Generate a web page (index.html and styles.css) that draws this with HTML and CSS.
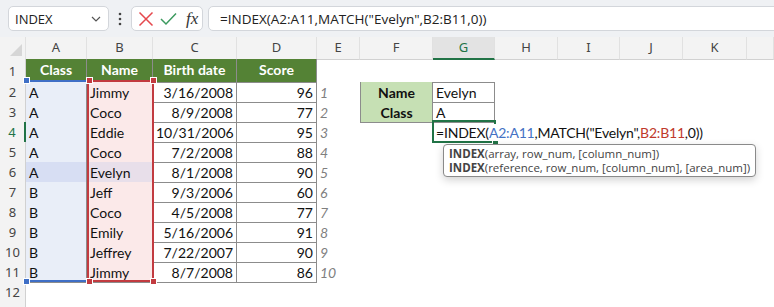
FILE: index.html
```html
<!DOCTYPE html>
<html lang="en">
<head>
  <meta charset="UTF-8">
  <title>INDEX MATCH</title>
  <link rel="stylesheet" href="styles.css">
</head>
<body>

  <div class="toolbar">
    <div class="namebox">
      <span>INDEX</span>
      <svg class="chev" width="10" height="6" viewBox="0 0 10 6"><path d="M1 1 L5 5 L9 1" fill="none" stroke="#555" stroke-width="1.2"/></svg>
    </div>
    <div class="dots">
      <svg width="4" height="14" viewBox="0 0 4 14"><circle cx="2" cy="2" r="1.3" fill="#444"/><circle cx="2" cy="7" r="1.3" fill="#444"/><circle cx="2" cy="12" r="1.3" fill="#444"/></svg>
    </div>
    <div class="fxbox">
      <svg width="16" height="16" viewBox="0 0 16 16"><path d="M1.5 1.5 L14.5 14.5 M14.5 1.5 L1.5 14.5" stroke="#e5484d" stroke-width="1.5" fill="none"/></svg>
      <svg width="17" height="14" viewBox="0 0 17 14"><path d="M1 7 L6 12 L16 1.5" stroke="#3c9a5f" stroke-width="1.5" fill="none"/></svg>
      <span class="fx">fx</span>
    </div>
    <div class="formula">=INDEX(A2:A11,MATCH("Evelyn",B2:B11,0))</div>
  </div>

  <div class="sheet">
    <div class="row colheads">
      <div class="corner">
        <svg width="14" height="14" viewBox="0 0 14 14"><polygon points="13,1 13,13 1,13" fill="#d6d6d6"/></svg>
      </div>
      <div class="ch">A</div><div class="ch">B</div><div class="ch">C</div><div class="ch">D</div>
      <div class="ch">E</div><div class="ch">F</div><div class="ch active">G</div><div class="ch">H</div>
      <div class="ch">I</div><div class="ch">J</div><div class="ch">K</div><div class="ch"></div>
    </div>

    <div class="row r1">
      <div class="rh">1</div>
      <div class="c t th">Class</div><div class="c t th">Name</div><div class="c t th">Birth date</div><div class="c t th">Score</div>
      <div class="c"></div><div class="c under"></div><div class="c under"></div>
    </div>
    <div class="row">
      <div class="rh">2</div>
      <div class="c t ca">A</div><div class="c t cb">Jimmy</div><div class="c t num">3/16/2008</div><div class="c t num">96</div>
      <div class="c idx">1</div><div class="c lk lbl first">Name</div><div class="c lk">Evelyn</div>
    </div>
    <div class="row">
      <div class="rh">3</div>
      <div class="c t ca">A</div><div class="c t cb">Coco</div><div class="c t num">8/9/2008</div><div class="c t num">77</div>
      <div class="c idx">2</div><div class="c lk lbl first">Class</div><div class="c lk">A</div>
    </div>
    <div class="row">
      <div class="rh active">4</div>
      <div class="c t ca">A</div><div class="c t cb">Eddie</div><div class="c t num">10/31/2006</div><div class="c t num">95</div>
      <div class="c idx">3</div><div class="c"></div>
      <div class="c edit"><span class="edit-text">=INDEX(<span class="ref-a">A2:A11</span>,MATCH("Evelyn",<span class="ref-b">B2:B11</span>,0))</span></div>
    </div>
    <div class="row">
      <div class="rh">5</div>
      <div class="c t ca">A</div><div class="c t cb">Coco</div><div class="c t num">7/2/2008</div><div class="c t num">88</div>
      <div class="c idx">4</div>
    </div>
    <div class="row">
      <div class="rh">6</div>
      <div class="c t ca hit">A</div><div class="c t cb hit">Evelyn</div><div class="c t num">8/1/2008</div><div class="c t num">90</div>
      <div class="c idx">5</div>
    </div>
    <div class="row">
      <div class="rh">7</div>
      <div class="c t ca">B</div><div class="c t cb">Jeff</div><div class="c t num">9/3/2006</div><div class="c t num">60</div>
      <div class="c idx">6</div>
    </div>
    <div class="row">
      <div class="rh">8</div>
      <div class="c t ca">B</div><div class="c t cb">Coco</div><div class="c t num">4/5/2008</div><div class="c t num">77</div>
      <div class="c idx">7</div>
    </div>
    <div class="row">
      <div class="rh">9</div>
      <div class="c t ca">B</div><div class="c t cb">Emily</div><div class="c t num">5/16/2006</div><div class="c t num">91</div>
      <div class="c idx">8</div>
    </div>
    <div class="row">
      <div class="rh">10</div>
      <div class="c t ca">B</div><div class="c t cb">Jeffrey</div><div class="c t num">7/22/2007</div><div class="c t num">90</div>
      <div class="c idx">9</div>
    </div>
    <div class="row">
      <div class="rh">11</div>
      <div class="c t ca">B</div><div class="c t cb">Jimmy</div><div class="c t num">8/7/2008</div><div class="c t num">86</div>
      <div class="c idx">10</div>
    </div>
    <div class="row">
      <div class="rh">12</div>
    </div>
    <div class="row">
      <div class="rh"></div>
    </div>

    <!-- range highlights while editing -->
    <div class="range-a">
      <span class="handle tl"></span><span class="handle bl"></span>
    </div>
    <div class="range-b">
      <span class="handle tl"></span><span class="handle tr"></span>
      <span class="handle bl"></span><span class="handle br"></span>
    </div>
    <div class="edit-box"><span class="handle br"></span></div>

    <div class="tip">
      <div><b>INDEX</b>(array, row_num, [column_num])</div>
      <div><b>INDEX</b>(reference, row_num, [column_num], [area_num])</div>
    </div>
  </div>

</body>
</html>
```

FILE: styles.css
```css
body {
  margin: 0;
  width: 774px;
  height: 307px;
  overflow: hidden;
  background: #fff;
  font-family: Lato, sans-serif;
}

/* formula bar */
.toolbar {
  display: flex;
  align-items: center;
  height: 37px;
  padding-left: 8px;
  background: #eff1f4;
  box-sizing: border-box;
  font-family: 'Open Sans', sans-serif;
  font-size: 13px;
  color: #222;
}

.namebox, .fxbox, .formula {
  height: 25px;
  box-sizing: border-box;
  background: #fff;
  border: 1px solid #d3d6db;
  border-radius: 5px;
  display: flex;
  align-items: center;
}

.namebox {
  width: 101px;
  padding: 0 7px 0 6px;
  justify-content: space-between;
}

.dots {
  width: 22px;
  display: flex;
  justify-content: center;
}

.fxbox {
  width: 72px;
  padding-left: 6px;
  gap: 6px;
}

.fx {
  font-family: 'Liberation Serif', serif;
  font-style: italic;
  font-size: 17px;
  color: #333;
  margin-left: 3px;
}

.formula {
  flex: 1;
  margin-left: 5px;
  margin-right: -8px;
  padding-left: 11px;
  font-size: 13.5px;
}

/* grid */
.sheet {
  position: relative;
}

.row {
  display: grid;
  grid-template-columns: 26px 61px 66px 84px 80px 43px 73px 62px 63px 62px 63px 64px 27px;
  height: 20px;
}

.colheads {
  height: 22px;
  background: #f3f3f3;
}

.r1 {
  height: 23px;
}

.corner, .ch {
  box-sizing: border-box;
  border-right: 1px solid #e1e1e1;
  border-bottom: 1px solid #d1d1d1;
}

.corner {
  display: flex;
  align-items: flex-end;
  justify-content: flex-end;
  padding: 0 2px 2px 0;
}

.ch {
  text-align: center;
  font-family: 'Noto Sans', sans-serif;
  font-size: 13px;
  line-height: 21px;
  color: #444;
}

.ch.active {
  background: #e3e3e3;
  color: #217346;
  border-bottom: 2px solid #217346;
}

.rh {
  box-sizing: border-box;
  background: #f3f3f3;
  border-right: 1px solid #d1d1d1;
  border-bottom: 1px solid #e1e1e1;
  text-align: center;
  font-family: 'Noto Sans', sans-serif;
  font-size: 13px;
  line-height: 19px;
  padding-top: 1px;
  color: #444;
}

.r1 .rh {
  line-height: 22px;
}

.rh.active {
  color: #217346;
  border-right: 2px solid #217346;
}

.c {
  box-sizing: border-box;
  padding: 3px 3px 0;
  font-size: 14px;
  line-height: 16px;
  white-space: nowrap;
  color: #111;
}

.t {
  border-right: 1px solid #8c8c8c;
  border-bottom: 1px solid #8c8c8c;
}

.num {
  text-align: right;
}

.th {
  background: #548235;
  color: #fff;
  font-weight: bold;
  text-align: center;
  padding-top: 3px;
}

.ca { background: #e9eef8; }
.cb { background: #fbe9e9; }
.ca.hit { background: #d7def3; }
.cb.hit { background: #e8dfea; }

.idx {
  font-style: italic;
  color: #7f7f7f;
}

.under {
  border-bottom: 1px solid #8c8c8c;
}

.lk {
  border-right: 1px solid #8c8c8c;
  border-bottom: 1px solid #8c8c8c;
}

.lk.first {
  border-left: 1px solid #8c8c8c;
}

.lbl {
  background: #c6e0b4;
  font-weight: bold;
  text-align: center;
}

.edit {
  overflow: visible;
  position: relative;
  z-index: 2;
  letter-spacing: -0.2px;
}

.edit-text {
  background: #fff;
  padding-right: 2px;
}

.ref-a { color: #4472c4; }
.ref-b { color: #c0392b; }

/* overlays */
.range-a, .range-b, .edit-box {
  position: absolute;
  box-sizing: border-box;
}

.range-a {
  left: 26px;
  top: 43px;
  width: 61px;
  height: 202px;
  border-top: 2px solid #3f6fc6;
  border-bottom: 2px solid #3f6fc6;
}

.range-b {
  left: 87px;
  top: 43px;
  width: 67px;
  height: 202px;
  border: 2px solid #c23b40;
}

.edit-box {
  left: 432px;
  top: 83px;
  width: 64px;
  height: 23px;
  border: 2px solid #217346;
  z-index: 1;
}

.handle {
  position: absolute;
  width: 5px;
  height: 5px;
  border: 1px solid #fff;
  background: #c23b40;
}

.range-a .handle { background: #3f6fc6; }
.edit-box .handle { background: #217346; z-index: 3; }

.handle.tl { left: -3px; top: -5px; }
.handle.tr { right: -5px; top: -5px; }
.handle.bl { left: -3px; bottom: -5px; }
.handle.br { right: -5px; bottom: -5px; }

.tip {
  position: absolute;
  left: 443px;
  top: 107px;
  width: 313px;
  height: 33px;
  box-sizing: border-box;
  padding: 2px 0 0 5px;
  background: #fff;
  border: 1px solid #8a8a8a;
  border-radius: 4px;
  box-shadow: 0 3px 8px rgba(0, 0, 0, 0.18);
  font-family: 'Open Sans', sans-serif;
  font-size: 11.5px;
  line-height: 13.5px;
  color: #444;
  z-index: 4;
}

.tip b {
  font-weight: bold;
}
```
